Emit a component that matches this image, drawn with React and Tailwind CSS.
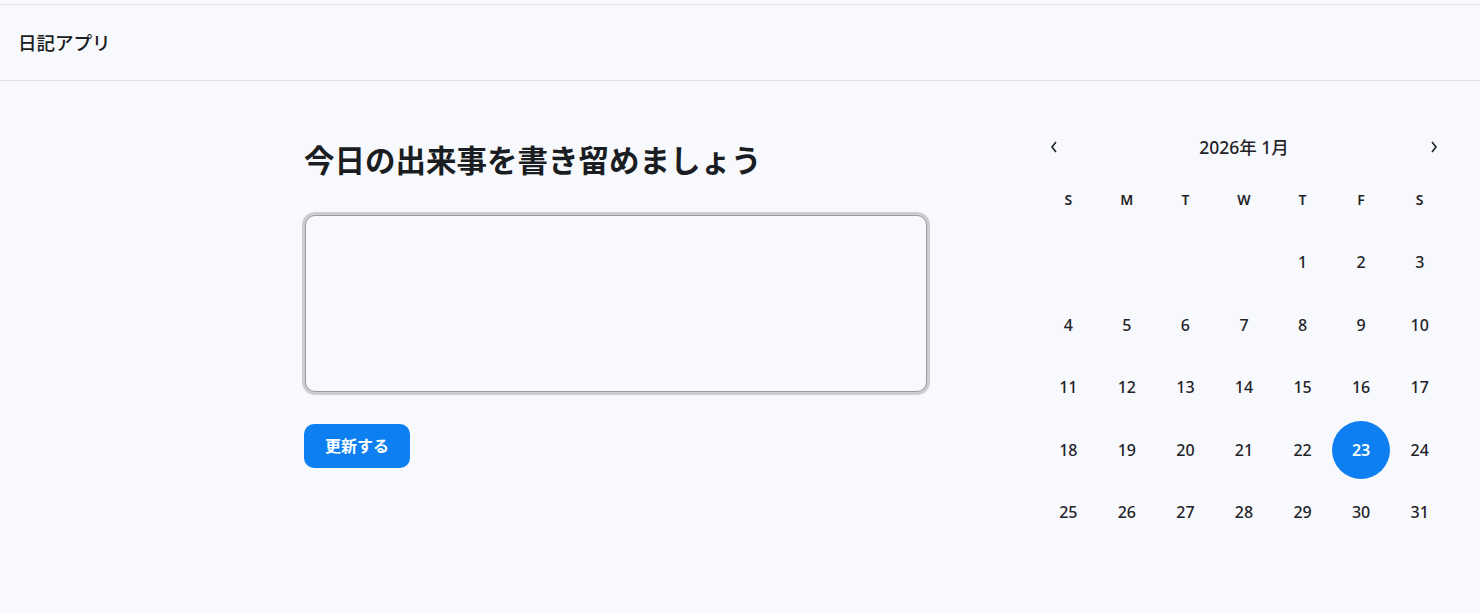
import { useState } from 'react';

const FONT = { fontFamily: '"Noto Sans", "Noto Sans CJK JP", sans-serif' };

const WEEK = ['S', 'M', 'T', 'W', 'T', 'F', 'S'];

function Calendar() {
  const [selected, setSelected] = useState(23);
  // Jan 2026 starts on Thursday
  const cells = [...Array(4).fill(null), ...Array.from({ length: 31 }, (_, i) => i + 1)];

  return (
    <div className="w-[410px]">
      <div className="flex items-center justify-between h-[22px] px-[10px]">
        <button className="text-[#1f2328]">
          <svg width="10" height="14" viewBox="0 0 10 14" fill="none" stroke="currentColor" strokeWidth="1.6">
            <path d="M7 2 L3 7 L7 12" />
          </svg>
        </button>
        <div className="text-[17.5px] font-medium text-[#1f2328]">2026年 1月</div>
        <button className="text-[#1f2328]">
          <svg width="10" height="14" viewBox="0 0 10 14" fill="none" stroke="currentColor" strokeWidth="1.6">
            <path d="M3 2 L7 7 L3 12" />
          </svg>
        </button>
      </div>
      <div className="grid grid-cols-7 mt-[31px]">
        {WEEK.map((d, i) => (
          <div key={i} className="h-[20px] flex items-center justify-center text-[14px] font-semibold text-[#1f2328]">
            {d}
          </div>
        ))}
      </div>
      <div className="grid grid-cols-7 mt-[22px]">
        {cells.map((d, i) => (
          <div key={i} className="h-[62.5px] flex items-center justify-center">
            {d && (
              <button
                onClick={() => setSelected(d)}
                className={
                  d === selected
                    ? 'w-[58px] h-[58px] rounded-full bg-[#0e7ff0] text-white font-semibold text-[16px]'
                    : 'w-[58px] h-[58px] rounded-full text-[#1f2328] text-[16px] font-medium'
                }
              >
                {d}
              </button>
            )}
          </div>
        ))}
      </div>
    </div>
  );
}

export default function App() {
  const [text, setText] = useState('');

  return (
    <div className="min-h-screen bg-[#f8f9fc]" style={FONT}>
      <div className="h-[4px]" />
      <header className="h-[77px] border-y border-[#e2e3e6] flex items-center px-[18px]">
        <h1 className="text-[18.5px] font-medium text-[#1a1d21]">日記アプリ</h1>
      </header>
      <main className="flex pl-[302px] pt-[55px]">
        <div className="w-[629px]">
          <h2 className="text-[30.5px] font-semibold text-[#1a1d21] leading-[48px] pl-[2px]">今日の出来事を書き留めましょう</h2>
          <textarea
            value={text}
            onChange={(e) => setText(e.target.value)}
            className="mt-[31px] mx-[3px] block w-[622px] h-[177px] rounded-[10px] border border-[#9a9a9a] ring-[3px] ring-[#cdcdcf] bg-[#f8f9fc] resize-none outline-none p-3 text-[16px]"
          />
          <button className="mt-[32px] ml-[2px] h-[44px] px-[21px] rounded-[10px] bg-[#0e7ff0] text-white text-[16px] font-semibold">
            更新する
          </button>
        </div>
        <div className="ml-[108px]">
          <Calendar />
        </div>
      </main>
    </div>
  );
}
